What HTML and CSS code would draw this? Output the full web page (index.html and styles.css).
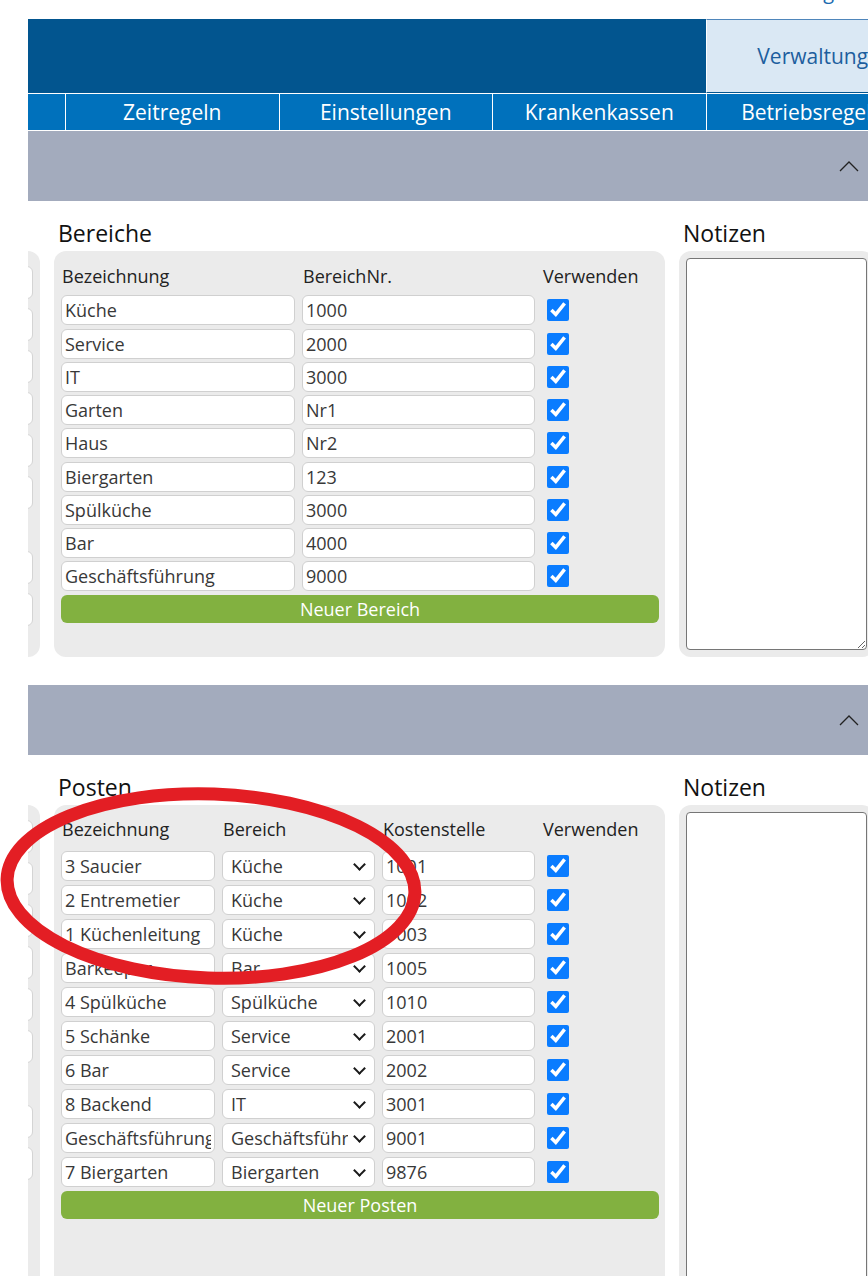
FILE: index.html
```html
<!DOCTYPE html>
<html lang="de">

<head>
  <meta charset="UTF-8" />
  <meta name="viewport" content="width=device-width, initial-scale=1.0" />
  <title>Verwaltung - Bereiche und Posten</title>
  <link rel="stylesheet" href="styles.css">
</head>

<body>
  <div class="page">
    <div class="topline"><a href="#">Abmeldung</a></div>

    <div class="tabs">
      <div class="tab"></div>
      <div class="tab"></div>
      <div class="tab"></div>
      <div class="tab"></div>
      <div class="tab active">Verwaltung</div>
    </div>

    <nav class="subnav">
      <a href="#"></a>
      <a href="#">Zeitregeln</a>
      <a href="#">Einstellungen</a>
      <a href="#">Krankenkassen</a>
      <a href="#">Betriebsregeln</a>
    </nav>

    <div class="bar">
      <svg width="20" height="12" viewBox="0 0 20 12"><polyline points="1,11 10,2 19,11" fill="none" stroke="#222" stroke-width="1.3" /></svg>
    </div>

    <!-- Bereiche -->
    <section class="row">
      <div class="col cut">
        <h3>&nbsp;</h3>
        <div class="panel">
          <div class="field"></div>
          <div class="field"></div>
          <div class="field"></div>
          <div class="field"></div>
          <div class="field"></div>
          <div class="field"></div>
          <div class="field skip"></div>
          <div class="field"></div>
        </div>
      </div>

      <div class="col main">
        <h3>Bereiche</h3>
        <div class="panel">
          <div class="grid bereiche">
            <span class="head">Bezeichnung</span>
            <span class="head">BereichNr.</span>
            <span class="head">Verwenden</span>

            <input type="text" value="Küche"><input type="text" value="1000"><input type="checkbox" checked>
            <input type="text" value="Service"><input type="text" value="2000"><input type="checkbox" checked>
            <input type="text" value="IT"><input type="text" value="3000"><input type="checkbox" checked>
            <input type="text" value="Garten"><input type="text" value="Nr1"><input type="checkbox" checked>
            <input type="text" value="Haus"><input type="text" value="Nr2"><input type="checkbox" checked>
            <input type="text" value="Biergarten"><input type="text" value="123"><input type="checkbox" checked>
            <input type="text" value="Spülküche"><input type="text" value="3000"><input type="checkbox" checked>
            <input type="text" value="Bar"><input type="text" value="4000"><input type="checkbox" checked>
            <input type="text" value="Geschäftsführung"><input type="text" value="9000"><input type="checkbox" checked>

            <button type="button" class="add">Neuer Bereich</button>
          </div>
        </div>
      </div>

      <div class="col notes">
        <h3>Notizen</h3>
        <div class="panel"><textarea></textarea></div>
      </div>
    </section>

    <div class="bar">
      <svg width="20" height="12" viewBox="0 0 20 12"><polyline points="1,11 10,2 19,11" fill="none" stroke="#222" stroke-width="1.3" /></svg>
    </div>

    <!-- Posten -->
    <section class="row">
      <div class="col cut">
        <h3>&nbsp;</h3>
        <div class="panel tall">
          <div class="field"></div>
          <div class="field"></div>
          <div class="field"></div>
          <div class="field"></div>
          <div class="field"></div>
          <div class="field"></div>
          <div class="field skip"></div>
          <div class="field"></div>
        </div>
      </div>

      <div class="col main">
        <h3>Posten</h3>
        <div class="panel tall">
          <div class="grid posten">
            <span class="head">Bezeichnung</span>
            <span class="head">Bereich</span>
            <span class="head">Kostenstelle</span>
            <span class="head">Verwenden</span>

            <input type="text" value="3 Saucier">
            <span class="select"><select><option>Küche</option></select></span>
            <input type="text" value="1001"><input type="checkbox" checked>

            <input type="text" value="2 Entremetier">
            <span class="select"><select><option>Küche</option></select></span>
            <input type="text" value="1002"><input type="checkbox" checked>

            <input type="text" value="1 Küchenleitung">
            <span class="select"><select><option>Küche</option></select></span>
            <input type="text" value="1003"><input type="checkbox" checked>

            <input type="text" value="Barkeeper">
            <span class="select"><select><option>Bar</option></select></span>
            <input type="text" value="1005"><input type="checkbox" checked>

            <input type="text" value="4 Spülküche">
            <span class="select"><select><option>Spülküche</option></select></span>
            <input type="text" value="1010"><input type="checkbox" checked>

            <input type="text" value="5 Schänke">
            <span class="select"><select><option>Service</option></select></span>
            <input type="text" value="2001"><input type="checkbox" checked>

            <input type="text" value="6 Bar">
            <span class="select"><select><option>Service</option></select></span>
            <input type="text" value="2002"><input type="checkbox" checked>

            <input type="text" value="8 Backend">
            <span class="select"><select><option>IT</option></select></span>
            <input type="text" value="3001"><input type="checkbox" checked>

            <input type="text" value="Geschäftsführung">
            <span class="select"><select><option>Geschäftsführung</option></select></span>
            <input type="text" value="9001"><input type="checkbox" checked>

            <input type="text" value="7 Biergarten">
            <span class="select"><select><option>Biergarten</option></select></span>
            <input type="text" value="9876"><input type="checkbox" checked>

            <button type="button" class="add">Neuer Posten</button>
          </div>
        </div>
      </div>

      <div class="col notes">
        <h3>Notizen</h3>
        <div class="panel tall"><textarea></textarea></div>
      </div>
    </section>
  </div>

  <svg class="mark" width="868" height="1276" viewBox="0 0 868 1276">
    <ellipse cx="211" cy="886" rx="204" ry="92" transform="rotate(2 211 886)" fill="none" stroke="#e31e24" stroke-width="13" />
  </svg>
</body>

</html>
```

FILE: styles.css
```css
* {
  box-sizing: border-box;
}

html {
  overflow: hidden;
}

body {
  margin: 0;
  position: relative;
  font-family: 'Open Sans', 'Noto Sans', sans-serif;
  color: #222;
  background: #fff;
}

.page {
  margin-left: 28px;
  width: 840px;
  overflow: hidden;
}

/* top line, only the descender of the link is visible */
.topline {
  height: 19px;
  display: flex;
  justify-content: flex-end;
  padding-right: 34px;
  overflow: hidden;
}

.topline a {
  margin-top: -18px;
  font-size: 20px;
  line-height: 20px;
  color: #1a6aaf;
  text-decoration: none;
}

/* main tabs */
.tabs {
  display: flex;
  height: 74px;
  margin-left: -176.5px;
  background: #02558f;
}

.tab {
  flex: 0 0 213.5px;
}

.tab.active {
  display: flex;
  align-items: center;
  justify-content: center;
  background: #dae8f4;
  border-left: 1px solid #fff;
  border-top: 1px solid #4f86bb;
  border-bottom: 1px solid #02558f;
  color: #1d5e9e;
  font-size: 21px;
}

.subnav {
  display: flex;
  height: 36px;
  margin: 1px 0 0 -176.5px;
  background: #0071bc;
}

.subnav a {
  flex: 0 0 213.5px;
  display: flex;
  align-items: center;
  justify-content: center;
  border-left: 1px solid #fff;
  color: #fff;
  font-size: 21px;
  text-decoration: none;
}

/* collapsible section bar */
.bar {
  height: 70px;
  margin-top: 1px;
  display: flex;
  align-items: center;
  justify-content: flex-end;
  padding-right: 9px;
  background: #a3abbd;
}

.row {
  display: flex;
  gap: 14px;
  padding-top: 17px;
  margin-bottom: 28px;
}

.col {
  flex-shrink: 0;
  display: flex;
  flex-direction: column;
}

.col h3 {
  margin: 0 0 3px;
  padding-left: 4px;
  height: 30px;
  font-size: 23px;
  line-height: 30px;
  font-weight: normal;
  color: #111;
  white-space: nowrap;
}

.panel {
  flex: 1;
  background: #ebebeb;
  border-radius: 12px;
}

.panel.tall {
  min-height: 540px;
}

/* column cut off at the left edge */
.cut {
  width: 200px;
  margin-left: -188px;
}

.cut .panel {
  padding: 15px 7px 0 0;
}

.cut .field {
  height: 33px;
  margin-bottom: 9px;
  background: #fff;
  border: 1px solid #d4d4d4;
  border-radius: 6px;
}

.cut .field.skip {
  margin-top: 42px;
}

.main {
  width: 611px;
}

.main .panel {
  padding: 13px 6px 34px 7px;
}

.main .panel.tall {
  padding-top: 12px;
}

.grid {
  display: grid;
  column-gap: 7px;
  align-items: center;
}

.bereiche {
  grid-template-columns: 234px 233px 117px;
  grid-template-rows: 28px;
  row-gap: 3.25px;
}

.posten {
  grid-template-columns: 154px 153px 153px 117px;
  grid-template-rows: 30px;
  row-gap: 4px;
}

.head {
  padding-left: 1px;
  font-size: 18px;
  line-height: 24px;
  color: #222;
  align-self: start;
}

.grid input[type="text"],
.grid select {
  display: block;
  height: 30px;
  width: 100%;
  padding: 0 3px;
  border: 1px solid #d0d0d0;
  border-radius: 6px;
  background: #fff;
  font-family: inherit;
  font-size: 18px;
  color: #383838;
  outline: none;
}

.select {
  position: relative;
}

.grid select {
  appearance: none;
  padding: 0 26px 0 8px;
}

.select::after {
  content: "";
  position: absolute;
  right: 11px;
  top: 9px;
  width: 7px;
  height: 7px;
  border-right: 2.5px solid #1a1a1a;
  border-bottom: 2.5px solid #1a1a1a;
  transform: rotate(45deg);
  pointer-events: none;
}

.grid input[type="checkbox"] {
  width: 22px;
  height: 22px;
  margin: 0 0 0 5px;
  accent-color: #0a7cff;
}

.add {
  grid-column: 1 / -1;
  height: 28px;
  border: none;
  border-radius: 6px;
  background: #82b140;
  color: #fff;
  font-family: inherit;
  font-size: 18px;
  cursor: pointer;
}

.notes {
  width: 195px;
}

.notes .panel {
  display: flex;
  padding: 7px;
}

.notes textarea {
  flex: 1;
  width: 100%;
  border: 1px solid #767676;
  border-radius: 4px;
  background: #fff;
  font-family: inherit;
}

.mark {
  position: absolute;
  left: 0;
  top: 0;
  pointer-events: none;
}
```
